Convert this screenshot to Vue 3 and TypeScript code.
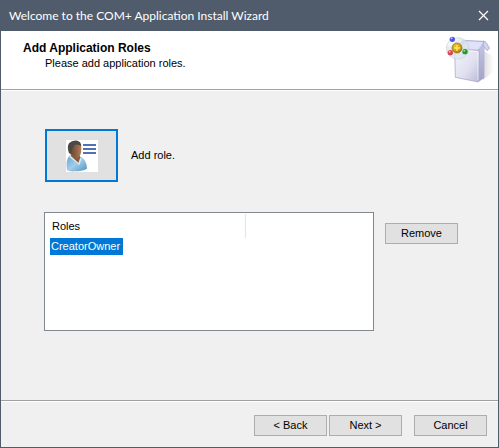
<script setup lang="ts">
import { ref } from 'vue'

const roles = ref<string[]>(['CreatorOwner'])
const selected = ref<string | null>('CreatorOwner')

function removeRole(): void {
  roles.value = roles.value.filter((role) => role !== selected.value)
  selected.value = null
}
</script>

<template>
  <main class="window">
    <header class="titlebar">
      <h1 class="title">Welcome to the COM+ Application Install Wizard</h1>
      <button class="close" type="button" aria-label="Close">
        <svg width="12" height="12" viewBox="0 0 12 12" aria-hidden="true">
          <path d="M1 1 10 10M10 1 1 10" stroke="#fff" stroke-width="1.2" fill="none" />
        </svg>
      </button>
    </header>

    <section class="banner">
      <div class="heading">
        <h2 class="step">Add Application Roles</h2>
        <p class="hint">Please add application roles.</p>
      </div>
      <svg class="box" width="48" height="48" viewBox="45 108 144 144" aria-hidden="true">
        <defs>
          <linearGradient id="front" x1="0" y1="0" x2="1" y2="1">
            <stop offset="0" stop-color="#f4f4fc" />
            <stop offset="0.6" stop-color="#dfdff0" />
            <stop offset="1" stop-color="#b9bad9" />
          </linearGradient>
          <linearGradient id="side" x1="0" y1="0" x2="0" y2="1">
            <stop offset="0" stop-color="#c3c4e0" />
            <stop offset="1" stop-color="#a3a4c6" />
          </linearGradient>
          <linearGradient id="shade" x1="0" y1="0" x2="1" y2="0">
            <stop offset="0" stop-color="#dcdce0" />
            <stop offset="1" stop-color="#fff" />
          </linearGradient>
          <radialGradient id="gold" cx="0.4" cy="0.3" r="0.8">
            <stop offset="0" stop-color="#f0c030" />
            <stop offset="0.6" stop-color="#d09a10" />
            <stop offset="1" stop-color="#8c6404" />
          </radialGradient>
        </defs>
        <path d="M158 154 189 168 189 214 156 240Z" fill="url(#shade)" />
        <path d="M96 121 160 124 154 150 78 143Z" fill="#c2c4ea" stroke="#9fa1ce" stroke-width="2" />
        <path d="M104 124 157 127 140 149 90 143Z" fill="#e1e2fa" />
        <path d="M143 152 157 130 161 144 160 234 142 246Z" fill="url(#side)" />
        <path d="M158 123 165 127 176 145 168 152 156 136Z" fill="#d2d4f0" stroke="#9a9cc6" stroke-width="2" />
        <path d="M71 145 144 152 142 246 73 232Z" fill="url(#front)" stroke="#9b9cc2" stroke-width="2" />
        <path d="M74 148 141 155V241" fill="none" stroke="#fff" stroke-width="2" />
        <ellipse cx="80" cy="145" rx="34" ry="32" fill="#dce6ea" fill-opacity="0.7" stroke="#c5d2d8" stroke-width="2" />
        <path d="M48 137Q60 112 84 116 70 124 65 142Z" fill="#fff" fill-opacity="0.55" />
        <circle cx="64" cy="118" r="8" fill="#4b55d8" />
        <circle cx="62" cy="115" r="3" fill="#b5bbff" />
        <circle cx="58" cy="158" r="8" fill="#d6454c" />
        <circle cx="56" cy="155" r="3" fill="#f8b0b0" />
        <circle cx="102" cy="155" r="8" fill="#28952d" />
        <circle cx="100" cy="152" r="3" fill="#93dd8f" />
        <circle cx="78" cy="144" r="15" fill="url(#gold)" stroke="#8a6a12" stroke-width="2" />
        <path d="M78 135V153M69 144H87" stroke="#ffec5c" stroke-width="4" />
      </svg>
    </section>

    <section class="content">
      <div class="add-row">
        <button id="add-role" class="add" type="button">
          <svg width="32" height="32" viewBox="75 42 96 96" aria-hidden="true">
            <defs>
              <linearGradient id="skin" x1="0" y1="0" x2="1" y2="0">
                <stop offset="0" stop-color="#5e3f2b" />
                <stop offset="0.6" stop-color="#8f6044" />
                <stop offset="1" stop-color="#b08060" />
              </linearGradient>
              <linearGradient id="shirt" x1="0" y1="0" x2="1" y2="1">
                <stop offset="0" stop-color="#6ba4cd" />
                <stop offset="0.5" stop-color="#a0cdea" />
                <stop offset="1" stop-color="#5591bd" />
              </linearGradient>
            </defs>
            <path d="M75 42H171V138H75Z" fill="#fff" />
            <path d="M78 132Q73 100 87 88L106 96 119 92Q137 100 138 128 124 136 100 136 84 137 78 132Z" fill="url(#shirt)" />
            <path d="M88 80H112L119 95 114 112 91 92Z" fill="#8a5a3d" />
            <path d="M87 88 112 111 118 94 122 98 115 118 85 93Z" fill="#cfe7f6" />
            <path d="M84 60Q91 44 107 46 122 50 121 69 121 91 109 96 96 95 88 79Z" fill="url(#skin)" />
            <path d="M84 82Q77 62 84 52 94 41 109 44 120 47 121 60 109 52 99 58 97 66 93 70L91 84Z" fill="#4c4845" />
            <path d="M126 57H165M126 69H165M126 81H165" stroke="#5270b5" stroke-width="6" />
          </svg>
        </button>
        <label for="add-role">Add role.</label>
      </div>

      <div class="roles-row">
        <div class="list">
          <table>
            <thead>
              <tr>
                <th scope="col">Roles</th>
              </tr>
            </thead>
            <tbody>
              <tr v-for="role in roles" :key="role">
                <td>
                  <span class="role" :class="{ selected: role === selected }" @click="selected = role">{{ role }}</span>
                </td>
              </tr>
            </tbody>
          </table>
        </div>
        <button class="button" type="button" @click="removeRole">Remove</button>
      </div>
    </section>

    <footer class="actions">
      <div class="pair">
        <button class="button" type="button">&lt; Back</button>
        <button class="button" type="button">Next &gt;</button>
      </div>
      <button class="button" type="button">Cancel</button>
    </footer>
  </main>
</template>

<style>
body {
  margin: 0;
}
</style>

<style scoped>
.window {
  box-sizing: border-box;
  min-height: 100vh;
  display: flex;
  flex-direction: column;
  border: 1px solid #505c6b;
  background: #f0f0f0;
  color: #000;
  font: 11px/15px "Liberation Sans", sans-serif;
}

button {
  box-sizing: border-box;
  margin: 0;
  padding: 0;
  font: inherit;
  color: inherit;
}

.titlebar {
  display: flex;
  align-items: center;
  justify-content: space-between;
  height: 30px;
  padding: 0 8px;
  background: #505c6b;
  color: #fff;
}

.title {
  margin: 0;
  font: 12px/16px Lato, "Open Sans", sans-serif;
}

.close {
  display: flex;
  border: 0;
  background: none;
}

.banner {
  display: flex;
  justify-content: space-between;
  height: 58px;
  padding: 0 4px 0 22px;
  background: #fff;
  border-bottom: 1px solid #a0a0a0;
}

.heading {
  padding-top: 9px;
}

.step {
  margin: 0;
  font-size: 12px;
  line-height: 16px;
}

.hint {
  margin: 0;
  padding-left: 22px;
}

.box {
  margin-top: 5px;
}

.content {
  flex: 1;
  padding: 38px 40px 24px 43px;
  border-top: 1px solid #fff;
}

.add-row {
  display: flex;
  align-items: center;
  gap: 13px;
  padding-left: 1px;
}

.add {
  display: flex;
  align-items: center;
  justify-content: center;
  width: 73px;
  height: 53px;
  border: 2px solid #0078d7;
  background: #e1e1e1;
}

.roles-row {
  display: flex;
  align-items: flex-start;
  gap: 11px;
  margin-top: 30px;
}

.roles-row .button {
  margin-top: 11px;
}

.list {
  box-sizing: border-box;
  flex: 1;
  min-height: 119px;
  padding: 1px;
  border: 1px solid #828790;
  background: #fff;
}

table {
  width: 200px;
  border-collapse: collapse;
}

th {
  height: 24px;
  padding: 0 6px;
  border-right: 1px solid #e5e5e5;
  font-weight: normal;
  text-align: left;
}

td {
  padding: 0 4px;
}

.role {
  display: inline-block;
  padding: 1px 3px 1px 1px;
}

.selected {
  background: #0078d7;
  color: #fff;
}

.button {
  width: 73px;
  height: 21px;
  border: 1px solid #adadad;
  background: #e1e1e1;
}

.actions {
  display: flex;
  justify-content: flex-end;
  gap: 12px;
  padding: 13px 11px 11px;
  border-top: 1px solid #fff;
  box-shadow: 0 -1px #a0a0a0;
}

.pair {
  display: flex;
  gap: 2px;
}
</style>
